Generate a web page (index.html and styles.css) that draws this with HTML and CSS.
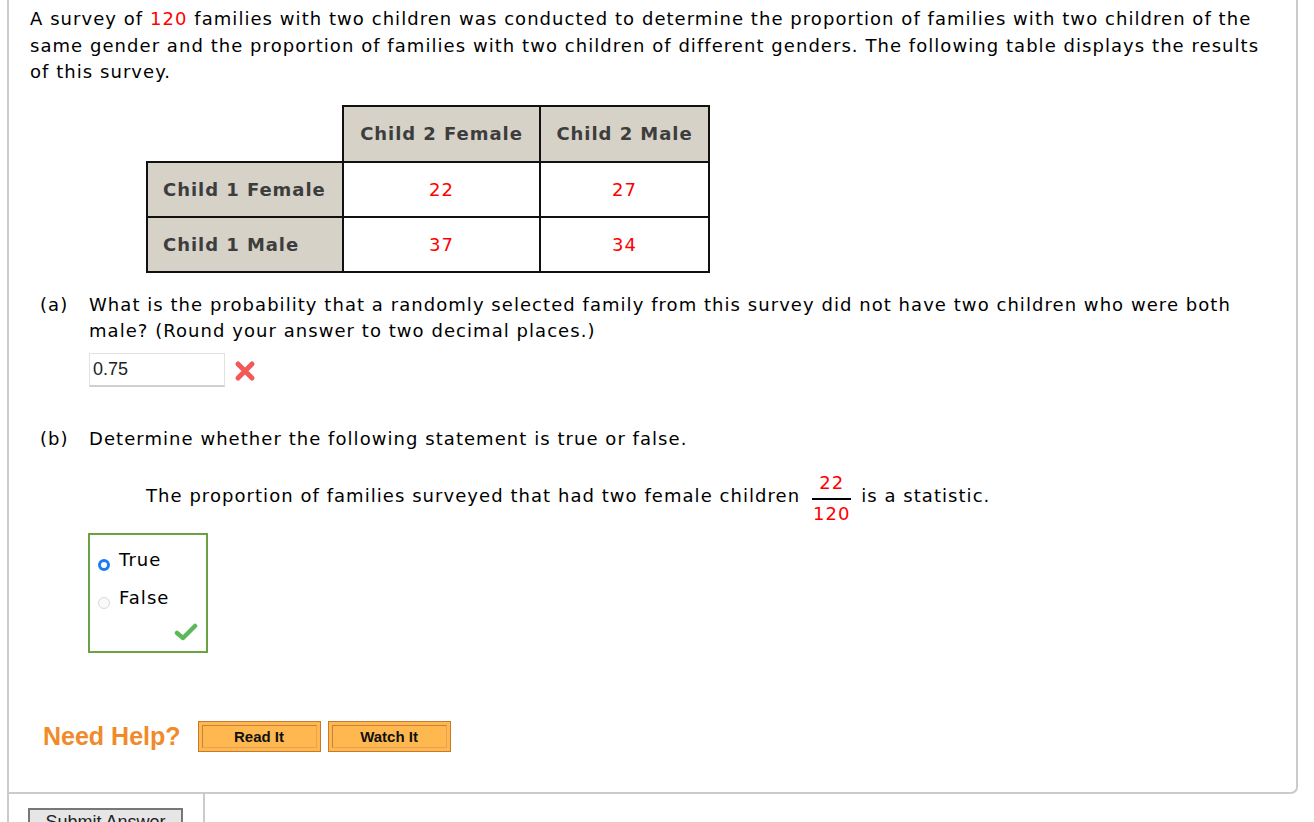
FILE: index.html
```html
<!DOCTYPE html>
<html>
<head>
<meta charset="utf-8">
<link rel="stylesheet" href="styles.css">
</head>
<body>
<div class="question">
  <p class="intro">A survey of <span class="red">120</span> families with two children was conducted to determine the proportion of families with two children of the same gender and the proportion of families with two children of different genders. The following table displays the results of this survey.</p>

  <table class="data">
    <tr>
      <td class="blank"></td>
      <th>Child 2 Female</th>
      <th>Child 2 Male</th>
    </tr>
    <tr>
      <th class="rowh">Child 1 Female</th>
      <td>22</td>
      <td>27</td>
    </tr>
    <tr>
      <th class="rowh">Child 1 Male</th>
      <td>37</td>
      <td>34</td>
    </tr>
  </table>

  <div class="part part-a">
    <div class="plabel">(a)</div>
    <div class="pbody">
      <p>What is the probability that a randomly selected family from this survey did not have two children who were both male? (Round your answer to two decimal places.)</p>
      <div class="answer-row">
        <div class="input">0.75</div>
        <svg class="xmark" width="22" height="22" viewBox="0 0 22 22">
          <path d="M4 4 L18 18 M18 4 L4 18" stroke="#f25a5a" stroke-width="5" stroke-linecap="round"/>
        </svg>
      </div>
    </div>
  </div>

  <div class="part part-b">
    <div class="plabel">(b)</div>
    <div class="pbody">
      <p>Determine whether the following statement is true or false.</p>
    </div>
  </div>

  <div class="statement">
    <span>The proportion of families surveyed that had two female children</span>
    <span class="frac"><span class="num">22</span><span class="den">120</span></span>
    <span>is a statistic.</span>
  </div>

  <div class="choices">
    <div class="choice"><span class="radio on"></span><span>True</span></div>
    <div class="choice"><span class="radio"></span><span>False</span></div>
    <svg class="check" width="24" height="20" viewBox="0 0 24 20">
      <path d="M3 11 L9 16 L21 4" fill="none" stroke="#5cb85c" stroke-width="4.5" stroke-linecap="round" stroke-linejoin="round"/>
    </svg>
  </div>

  <div class="help">
    <span class="need">Need Help?</span>
    <span class="hbtn"><span class="hin">Read It</span></span>
    <span class="hbtn"><span class="hin">Watch It</span></span>
  </div>
</div>
<div class="footer">
  <div class="footer-left"><div class="submit">Submit Answer</div></div>
  <div class="footer-right"></div>
</div>
</body>
</html>
```

FILE: styles.css
```css
html, body {
  margin: 0;
  padding: 0;
  background: #fff;
  overflow: hidden;
}
body {
  font-family: "DejaVu Sans", Verdana, sans-serif;
  font-size: 18px;
  letter-spacing: 1.05px;
  color: #000;
}
.red { color: #ff0000; }
.question {
  margin-left: 7px;
  width: 1266px;
  border: 2px solid #cbcbcb;
  border-top: none;
  border-bottom-right-radius: 7px;
  padding: 6px 0 40px 21px;
  height: 746px;
}
.intro {
  margin: 0;
  line-height: 26.5px;
  width: 1240px;
}
.data {
  border-collapse: collapse;
  margin: 19px 0 0 116px;
  font-size: 18px;
  letter-spacing: 0.95px;
}
.data th, .data td {
  border: 2px solid #111;
  height: 53px;
  padding: 0;
}
.data tr:first-child th { height: 54px; }
.data td.blank {
  border: none;
  border-bottom: 2px solid #111;
  border-right: 2px solid #111;
  width: 195px;
}
.data th {
  background: #d6d2c8;
  color: #3d3d3d;
  font-weight: bold;
  text-align: center;
}
.data tr:first-child th:nth-child(2) { width: 195px; }
.data tr:first-child th:nth-child(3) { width: 167px; }
.data th.rowh {
  text-align: left;
  padding-left: 15px;
}
.data td {
  color: #ff0000;
  text-align: center;
}
.part {
  display: flex;
  line-height: 26.5px;
}
.part p { margin: 0; }
.plabel {
  width: 49px;
  padding-left: 10px;
  flex: none;
}
.pbody { flex: 1; padding-right: 30px; }
.part-a { margin-top: 19px; }
.answer-row {
  display: flex;
  align-items: center;
  margin-top: 8px;
  gap: 9px;
}
.input {
  width: 131px;
  height: 31px;
  border: 1px solid #e2e2e2;
  border-bottom: 2px solid #d0d0d0;
  font-family: "Liberation Sans", Arial, sans-serif;
  font-size: 18px;
  letter-spacing: 0;
  line-height: 31px;
  padding-left: 3px;
  color: #222;
}
.xmark { margin-top: 2px; }
.part-b { margin-top: 39px; }
.statement {
  display: flex;
  align-items: center;
  margin: 10px 0 0 116px;
  gap: 8px;
}
.frac {
  display: inline-flex;
  flex-direction: column;
  align-items: center;
  color: #ff0000;
  margin: 7px 2px 0 4px;
}
.frac .num { border-bottom: 2px solid #000; padding: 0 7px 1px; line-height: 28px; }
.frac .den { line-height: 28px; }
.choices {
  margin: 5px 0 0 58px;
  width: 116px;
  border: 2px solid #6aa243;
  position: relative;
  padding-top: 8px;
  box-sizing: content-box;
  height: 108px;
}
.choice {
  display: flex;
  align-items: center;
  height: 38px;
  padding-left: 8px;
  gap: 9px;
}
.choice span:last-child { margin-top: -6px; }
.radio {
  width: 12px;
  height: 12px;
  border-radius: 50%;
  box-sizing: border-box;
  border: 1px solid #d8d8d8;
  background: #fafafa;
  margin-top: 6px;
}
.radio.on {
  border: 3.5px solid #1a7ef0;
  background: #fff;
}
.check {
  position: absolute;
  right: 8px;
  bottom: 9px;
}
.help {
  display: flex;
  align-items: center;
  margin-top: 68px;
  padding-left: 13px;
}
.need {
  font-family: "Liberation Sans", Arial, sans-serif;
  font-weight: bold;
  font-size: 25px;
  letter-spacing: 0;
  color: #f08a2a;
  margin-right: 17px;
}
.hbtn {
  display: inline-block;
  width: 121px;
  height: 29px;
  border: 1px solid #c67a30;
  background: #ffb84f;
  box-sizing: content-box;
  margin-right: 7px;
  padding: 0;
}
.hin {
  display: block;
  margin: 3px;
  height: 21px;
  border: 1px solid #c4803c;
  border-right-color: #e6a255;
  border-bottom-color: #e6a255;
  font-family: "Liberation Sans", Arial, sans-serif;
  font-weight: bold;
  font-size: 15px;
  letter-spacing: 0;
  line-height: 22px;
  text-align: center;
  color: #111;
}
.footer {
  display: flex;
  margin-left: 7px;
  height: 40px;
}
.footer-left {
  width: 198px;
  border-left: 2px solid #cbcbcb;
  border-right: 2px solid #cbcbcb;
  padding: 14px 0 0 19px;
  box-sizing: border-box;
}
.submit {
  width: 151px;
  height: 24px;
  border: 2px solid #777;
  background: #e6e6e6;
  font-family: "Liberation Sans", Arial, sans-serif;
  font-size: 18px;
  letter-spacing: 0;
  line-height: 24px;
  text-align: center;
  color: #222;
}
```
